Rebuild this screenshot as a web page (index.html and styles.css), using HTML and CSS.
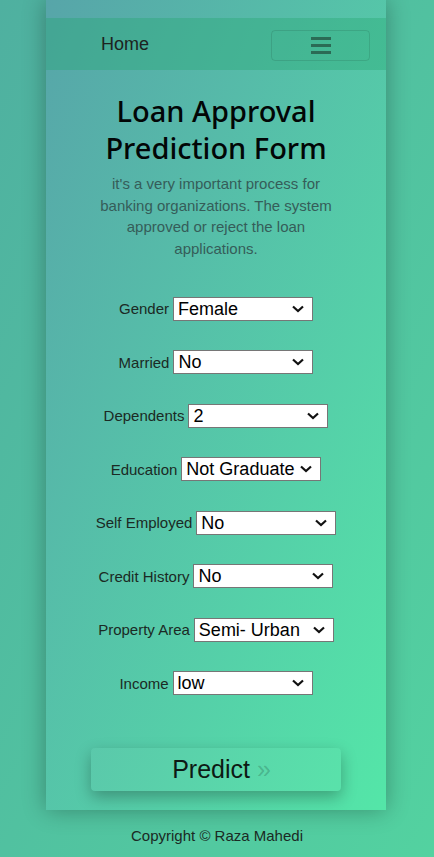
FILE: index.html
```html
<!DOCTYPE html>
<html lang="en">
<head>
<meta charset="utf-8">
<title>Loan Approval Prediction Form</title>
<link rel="stylesheet" href="styles.css">
</head>
<body>
<main class="card">
  <nav class="navbar">
    <a class="brand" href="#">Home</a>
    <button class="toggler" type="button" aria-label="Toggle navigation">
      <svg width="20" height="20" viewBox="0 0 20 20"><path d="M0 3.5h20M0 10.5h20M0 17.5h20" stroke="#2b6b55" stroke-width="3"/></svg>
    </button>
  </nav>
  <h1 class="title">Loan Approval Prediction Form</h1>
  <p class="lead">it's a very important process for banking organizations. The system approved or reject the loan applications.</p>
  <form class="form">
    <div class="row"><label>Gender</label><select><option>Female</option><option>Male</option></select></div>
    <div class="row"><label>Married</label><select><option>No</option><option>Yes</option></select></div>
    <div class="row"><label>Dependents</label><select><option>2</option><option>0</option><option>1</option><option>3+</option></select></div>
    <div class="row"><label>Education</label><select><option>Not Graduate</option><option>Graduate</option></select></div>
    <div class="row"><label>Self Employed</label><select><option>No</option><option>Yes</option></select></div>
    <div class="row"><label>Credit History</label><select><option>No</option><option>Yes</option></select></div>
    <div class="row"><label>Property Area</label><select><option>Semi- Urban</option><option>Urban</option><option>Rural</option></select></div>
    <div class="row"><label>Income</label><select><option>low</option><option>medium</option><option>high</option></select></div>
    <div class="actions"><button type="button" class="predict">Predict <span class="raquo">&raquo;</span></button></div>
  </form>
</main>
<footer class="footer">Copyright &copy; Raza Mahedi</footer>
</body>
</html>
```
FILE: styles.css
```css
html, body {
  margin: 0;
  padding: 0;
}
body {
  min-height: 857px;
  background: linear-gradient(to bottom right, #4fb0a0, #53d2a0);
  font-family: "Liberation Sans", Arial, sans-serif;
  color: #212529;
}
.card {
  width: 340px;
  margin: 0 48px 0 46px;
  padding: 18px 0 19px;
  background: linear-gradient(to bottom right, #57a5a9, #54e6a8);
  box-shadow: 0 0 22px rgba(0, 0, 0, 0.3);
}
.navbar {
  height: 52px;
  display: flex;
  align-items: center;
  justify-content: space-between;
  padding: 0 16px 0 55px;
  background: rgba(35, 165, 110, 0.35);
}
.brand {
  font-size: 18px;
  color: #1d2320;
  text-decoration: none;
}
.toggler {
  width: 99px;
  height: 31px;
  border: 1px solid rgba(0, 0, 0, 0.1);
  border-radius: 4px;
  background: transparent;
  display: flex;
  align-items: center;
  justify-content: center;
  padding: 0;
  margin-top: 2px;
}
.title {
  margin: 22px 0 0;
  font-family: "Noto Sans", "Open Sans", sans-serif;
  font-weight: 500;
  font-size: 29px;
  line-height: 37px;
  text-align: center;
  color: #020606;
  padding: 0 20px;
}
.lead {
  margin: 7px auto 0;
  width: 250px;
  font-size: 15px;
  line-height: 21.5px;
  text-align: center;
  color: #355d59;
}
.form {
  margin-top: 23px;
  display: flex;
  flex-direction: column;
  align-items: center;
}
.row {
  height: 53.5px;
  display: flex;
  align-items: center;
  justify-content: center;
  gap: 4px;
  font-size: 15px;
  color: #1b2a24;
}
.row select {
  appearance: none;
  -webkit-appearance: none;
  width: 140px;
  height: 24px;
  font-family: "Liberation Sans", Arial, sans-serif;
  font-size: 18px;
  color: #000;
  background: #fff url("data:image/svg+xml,%3Csvg xmlns='http://www.w3.org/2000/svg' width='12' height='8' viewBox='0 0 12 8'%3E%3Cpath d='M1 1.5l5 4.5 5-4.5' fill='none' stroke='%23111' stroke-width='2.2'/%3E%3C/svg%3E") no-repeat right 8px center;
  border: 1px solid #767676;
  border-radius: 0;
  padding: 0 0 0 4px;
}
.actions {
  margin-top: 37.5px;
}
.predict {
  width: 250px;
  height: 43px;
  border: none;
  border-radius: 4px;
  background: rgba(255, 255, 255, 0.03);
  box-shadow: 0 6px 16px rgba(0, 0, 0, 0.28);
  font-family: "Liberation Sans", Arial, sans-serif;
  font-size: 25px;
  color: #0d1a14;
  padding: 0 0 0 11px;
}
.raquo {
  color: rgba(0, 0, 0, 0.18);
}
.footer {
  text-align: center;
  font-size: 15px;
  color: #1b2a24;
  padding-top: 17px;
}
```
